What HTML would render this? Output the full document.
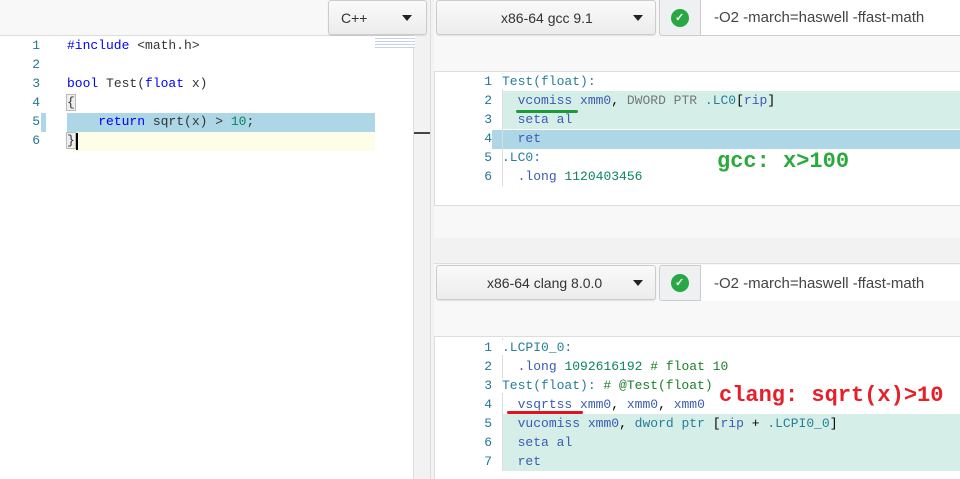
<!DOCTYPE html>
<html><head><style>
*{margin:0;padding:0;box-sizing:border-box}
body{width:960px;height:479px;position:relative;overflow:hidden;background:#f2f2f2;font-family:"Liberation Sans",sans-serif}
.a{position:absolute}
.mono{font-family:"Liberation Mono",monospace;font-size:13px;white-space:pre}
.btn{position:absolute;background:linear-gradient(#fafafa,#ececec);border:1px solid #ccc;border-radius:3px;font-size:14px;color:#333;box-shadow:0 1px 1px rgba(0,0,0,.1)}
.car{position:absolute;width:0;height:0;border-left:5px solid transparent;border-right:5px solid transparent;border-top:6px solid #222}
.chk{position:absolute;width:18px;height:18px;border-radius:50%;background:#28a745}
.ln{position:absolute;color:#237893;font-family:"Liberation Mono",monospace;font-size:13px;text-align:right;width:20px}
.k{color:#0000ff}.d{color:#333}.n{color:#098658}.t{color:#267f99}.g{color:#777}.b{color:#3b5bb5}
</style></head><body>
<!-- left panel -->
<div class="a" style="left:0;top:0;width:414px;height:479px;background:#fff;border-right:1px solid #ddd"></div>
<div class="a" style="left:0;top:0;width:414px;height:36px;background:#f8f8f8;border-bottom:1px solid #ddd"></div>
<div class="btn" style="left:328px;top:0;width:99px;height:35px"><span class="a" style="left:12px;top:9px">C++</span><div class="car" style="left:73px;top:14px"></div></div>
<div class="a" style="left:414px;top:132px;width:16px;height:2px;background:#444"></div>
<div class="a" style="left:430px;top:0;width:1px;height:479px;background:#ddd"></div>
<div class="a" style="left:67px;top:113px;width:308px;height:19px;background:#add6e6"></div>
<div class="a" style="left:67px;top:132px;width:308px;height:19px;background:#fefde8"></div>
<div class="a" style="left:41px;top:113px;width:5px;height:19px;background:#add6e6"></div>
<div class="ln" style="left:20px;top:38px">1</div>
<div class="ln" style="left:20px;top:57px">2</div>
<div class="ln" style="left:20px;top:76px">3</div>
<div class="ln" style="left:20px;top:95px">4</div>
<div class="ln" style="left:20px;top:114px">5</div>
<div class="ln" style="left:20px;top:133px">6</div>
<div class="a mono d" style="left:67px;top:38px"><span class="k">#include</span> &lt;math.h&gt;</div>
<div class="a mono d" style="left:67px;top:76px"><span class="k">bool</span> Test(<span class="k">float</span> x)</div>
<div class="a mono d" style="left:67px;top:95px"><span style="background:#eee;outline:1px solid #bbb">{</span></div>
<div class="a mono d" style="left:67px;top:114px">    <span class="k">return</span> sqrt(x) &gt; <span class="n">10</span>;</div>
<div class="a mono d" style="left:67px;top:133px"><span style="background:#eee;outline:1px solid #bbb">}</span></div>
<div class="a" style="left:76px;top:133px;width:2px;height:17px;background:#000"></div>
<div class="a" style="left:375px;top:36px;width:40px;height:12px;background:repeating-linear-gradient(#fff 0 2px,#c8d0f0 2px 3px)"></div>

<!-- right top panel -->
<div class="a" style="left:434px;top:0;width:526px;height:238px;background:#fff;border-left:1px solid #ddd;border-bottom:1px solid #ddd"></div>
<div class="a" style="left:434px;top:0;width:526px;height:72px;background:#f8f8f8;border-bottom:1px solid #ddd"></div>
<div class="btn" style="left:436px;top:0;width:220px;height:35px"><span class="a" style="left:64px;top:9px">x86-64 gcc 9.1</span><div class="car" style="left:196px;top:14px"></div></div>
<div class="a" style="left:659px;top:0;width:42px;height:36px;background:#eef0f2;border:1px solid #ccc;border-top:none;border-radius:0 0 0 3px"></div>
<div class="chk" style="left:671px;top:9px"></div><div class="a" style="left:675px;top:11px;color:#fff;font-size:11px;font-weight:bold">✓</div>
<div class="a" style="left:701px;top:0;width:259px;height:36px;background:#fff;border-bottom:1px solid #ccc"><span class="a" style="left:13px;top:9px;font-size:15px;color:#444">-O2 -march=haswell -ffast-math</span></div>
<div class="a" style="left:434px;top:205px;width:526px;height:33px;background:#f8f8f8;border-top:1px solid #ddd"></div>
<div class="a" style="left:502px;top:91px;width:458px;height:38px;background:#d5eee8"></div>
<div class="a" style="left:492px;top:130px;width:468px;height:19px;background:#add6e6"></div>
<div class="a" style="left:502px;top:73px;width:1px;height:113px;background:#ddd"></div>
<div class="ln" style="left:472px;top:74px">1</div><div class="ln" style="left:472px;top:93px">2</div><div class="ln" style="left:472px;top:112px">3</div><div class="ln" style="left:472px;top:131px">4</div><div class="ln" style="left:472px;top:150px">5</div><div class="ln" style="left:472px;top:169px">6</div>
<div class="a mono t" style="left:502px;top:74px;background:#fff">Test(float):</div>
<div class="a mono" style="left:502px;top:93px">  <span class="b">vcomiss</span> <span class="b">xmm0</span>, <span class="g">DWORD PTR</span> <span class="t">.LC0</span>[<span class="b">rip</span>]</div>
<div class="a mono" style="left:502px;top:112px">  <span class="b">seta</span> <span class="b">al</span></div>
<div class="a mono" style="left:502px;top:131px">  <span class="b">ret</span></div>
<div class="a mono t" style="left:502px;top:150px">.LC0:</div>
<div class="a mono" style="left:502px;top:169px">  <span class="b">.long</span> <span class="n">1120403456</span></div>
<div class="a" style="left:516px;top:110px;width:62px;height:3px;border-radius:2px;background:#1e9a3a"></div>
<div class="a mono" style="left:717px;top:149px;font-size:22px;font-weight:bold;color:#2aaa3c">gcc: x&gt;100</div>

<!-- right bottom panel -->
<div class="a" style="left:434px;top:263px;width:526px;height:216px;background:#fff;border-left:1px solid #ddd;border-top:1px solid #ddd"></div>
<div class="a" style="left:434px;top:264px;width:526px;height:73px;background:#f8f8f8;border-bottom:1px solid #ddd"></div>
<div class="btn" style="left:436px;top:265px;width:220px;height:35px"><span class="a" style="left:50px;top:9px">x86-64 clang 8.0.0</span><div class="car" style="left:196px;top:14px"></div></div>
<div class="a" style="left:659px;top:265px;width:42px;height:36px;background:#eef0f2;border:1px solid #ccc;border-radius:3px 0 0 3px"></div>
<div class="chk" style="left:671px;top:274px"></div><div class="a" style="left:675px;top:276px;color:#fff;font-size:11px;font-weight:bold">✓</div>
<div class="a" style="left:701px;top:265px;width:259px;height:36px;background:#fff"><span class="a" style="left:13px;top:10px;font-size:15px;color:#444">-O2 -march=haswell -ffast-math</span></div>
<div class="a" style="left:502px;top:414px;width:458px;height:57px;background:#d5eee8"></div>
<div class="a" style="left:502px;top:338px;width:1px;height:133px;background:#ddd"></div>
<div class="ln" style="left:472px;top:340px">1</div><div class="ln" style="left:472px;top:359px">2</div><div class="ln" style="left:472px;top:378px">3</div><div class="ln" style="left:472px;top:397px">4</div><div class="ln" style="left:472px;top:416px">5</div><div class="ln" style="left:472px;top:435px">6</div><div class="ln" style="left:472px;top:454px">7</div>
<div class="a mono t" style="left:502px;top:340px;background:#fff">.LCPI0_0:</div>
<div class="a mono" style="left:502px;top:359px">  <span class="b">.long</span> <span class="n">1092616192</span> <span style="color:#1a7f2a"># float 10</span></div>
<div class="a mono t" style="left:502px;top:378px;background:#fff">Test(float): <span style="color:#1a7f2a"># @Test(float)</span></div>
<div class="a mono" style="left:502px;top:397px">  <span class="b">vsqrtss</span> <span class="b">xmm0</span>, <span class="b">xmm0</span>, <span class="b">xmm0</span></div>
<div class="a mono" style="left:502px;top:416px">  <span class="b">vucomiss</span> <span class="b">xmm0</span>, <span class="t">dword ptr</span> [<span class="b">rip</span> + <span class="t">.LCPI0_0</span>]</div>
<div class="a mono" style="left:502px;top:435px">  <span class="b">seta</span> <span class="b">al</span></div>
<div class="a mono" style="left:502px;top:454px">  <span class="b">ret</span></div>
<div class="a" style="left:507px;top:411px;width:76px;height:3px;border-radius:2px;background:#e0141e"></div>
<div class="a mono" style="left:719px;top:383px;font-size:22px;font-weight:bold;color:#e81e28">clang: sqrt(x)&gt;10</div>
</body></html>
